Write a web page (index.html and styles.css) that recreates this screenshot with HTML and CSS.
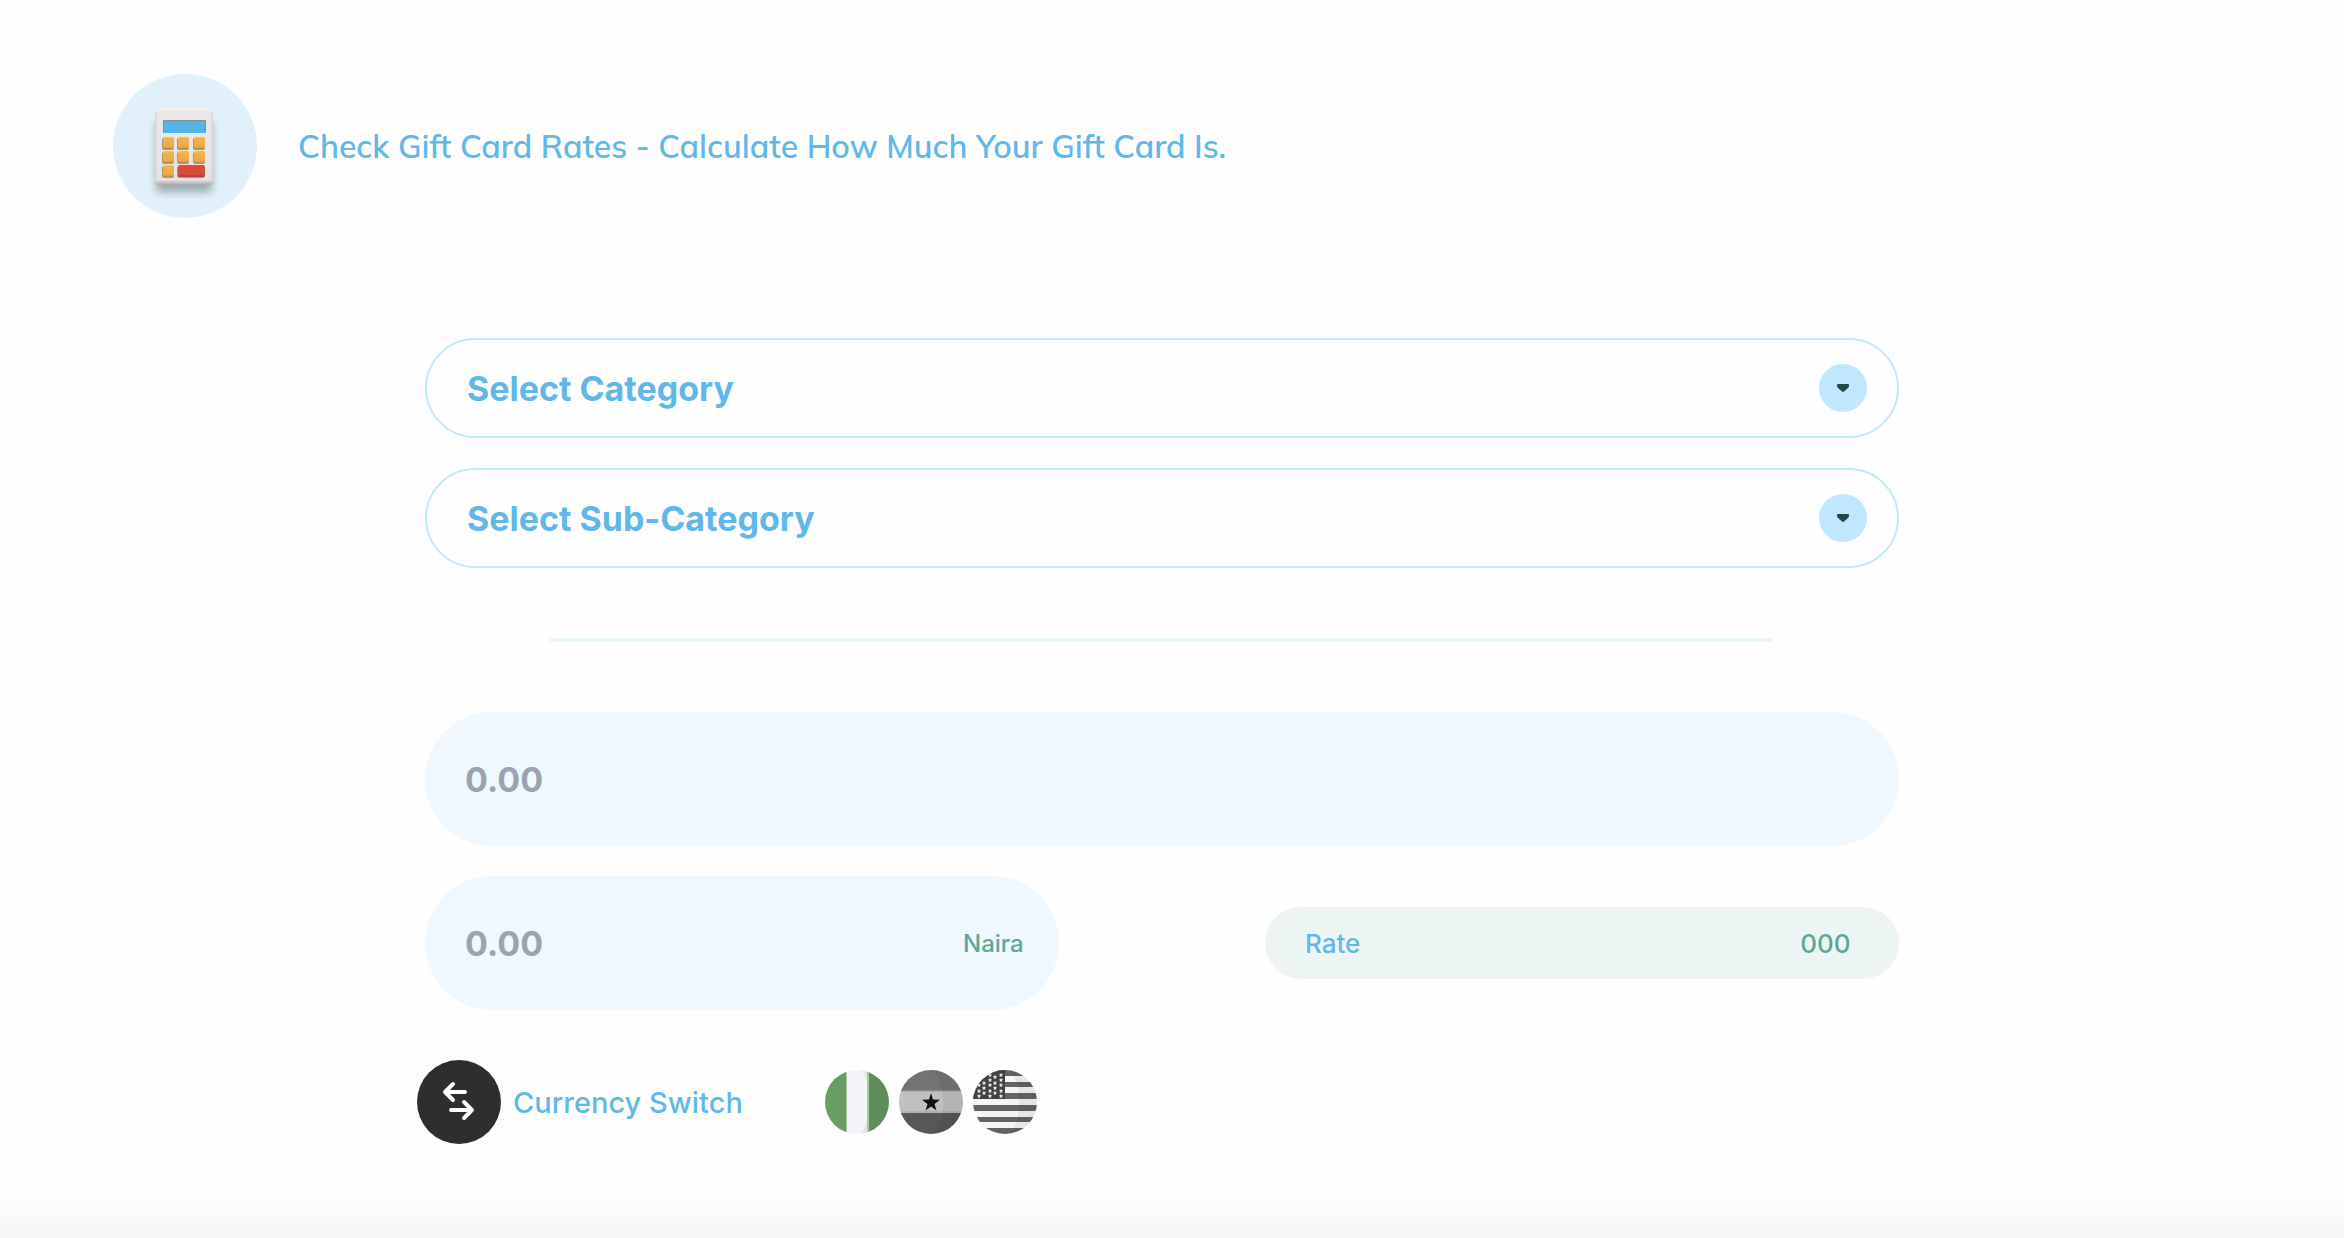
FILE: index.html
```html
<!DOCTYPE html>
<html lang="en">
<head>
<meta charset="utf-8">
<meta name="viewport" content="width=device-width, initial-scale=1">
<title>Gift Card Rate Calculator</title>
<link rel="stylesheet" href="styles.css">
</head>
<body>
<header class="page-header">
  <span class="badge">
    <svg class="calculator" viewBox="1 -6 76 104" aria-hidden="true">
      <defs>
        <linearGradient id="body" x1="0" y1="0" x2="0" y2="1"><stop offset="0" stop-color="#f6f4f4"/><stop offset=".06" stop-color="#e9e7e8"/><stop offset=".93" stop-color="#e6e4e5"/><stop offset="1" stop-color="#a9a7a7"/></linearGradient>
        <linearGradient id="key" x1="0" y1="0" x2="0" y2="1"><stop offset="0" stop-color="#f9c151"/><stop offset=".2" stop-color="#f3b048"/><stop offset=".8" stop-color="#efa945"/><stop offset="1" stop-color="#b98541"/></linearGradient>
        <filter id="soft" x="-30%" y="-30%" width="160%" height="160%"><feGaussianBlur stdDeviation="4"/></filter>
      </defs>
      <rect x="10" y="22" width="56" height="70" rx="4" fill="#6f8288" opacity=".65" filter="url(#soft)"/>
      <rect x="9" y="8" width="58" height="77" rx="4" fill="url(#body)"/>
      <path d="M10 12v69M66 12v69" stroke="#cfcdce" stroke-width="1"/>
      <rect x="17" y="20" width="43" height="13" rx="1" fill="#8a8d90"/>
      <rect x="18" y="21" width="41" height="12" fill="#52b5e6"/>
      <g fill="#a8977f">
        <rect x="16" y="38" width="12" height="12" rx="2"/><rect x="31" y="38" width="12" height="12" rx="2"/><rect x="47" y="38" width="12" height="12" rx="2"/>
        <rect x="16" y="52" width="12" height="12" rx="2"/><rect x="31" y="52" width="12" height="12" rx="2"/><rect x="47" y="52" width="12" height="12" rx="2"/>
        <rect x="16" y="66" width="12" height="12" rx="2"/><rect x="31" y="66" width="28" height="12" rx="2"/>
      </g>
      <g fill="url(#key)">
        <rect x="17" y="37" width="11" height="12" rx="2"/><rect x="32" y="37" width="11" height="12" rx="2"/><rect x="48" y="37" width="11" height="12" rx="2"/>
        <rect x="17" y="51" width="11" height="12" rx="2"/><rect x="32" y="51" width="11" height="12" rx="2"/><rect x="48" y="51" width="11" height="12" rx="2"/>
        <rect x="17" y="65" width="11" height="12" rx="2"/>
      </g>
      <rect x="32" y="65" width="27" height="12" rx="2" fill="#d94b3d"/>
      <path d="M33 76h25" stroke="#a53a30"/>
    </svg>
  </span>
  <h1 class="title">Check Gift Card Rates - Calculate How Much Your Gift Card Is.</h1>
</header>

<main class="calculator-form">
  <div class="picker">
    <select class="picker-select" aria-label="Category"><option>Select Category</option></select>
    <span class="picker-arrow"><svg width="12" height="8" viewBox="0 0 12 8"><path d="M1 0h10q1 0 1 1v1q0 1-1 2L7 7.500q-1 .8-2 0L1 4Q0 3 0 2V1q0-1 1-1z" fill="#1f4a48"/></svg></span>
  </div>
  <div class="picker">
    <select class="picker-select" aria-label="Sub-category"><option>Select Sub-Category</option></select>
    <span class="picker-arrow"><svg width="12" height="8" viewBox="0 0 12 8"><path d="M1 0h10q1 0 1 1v1q0 1-1 2L7 7.500q-1 .8-2 0L1 4Q0 3 0 2V1q0-1 1-1z" fill="#1f4a48"/></svg></span>
  </div>

  <hr class="divider">

  <div class="amount">
    <input class="amount-input" type="text" inputmode="decimal" placeholder="0.00" aria-label="Card amount">
  </div>
  <div class="result-row">
    <div class="amount">
      <input class="amount-input" id="payout" type="text" inputmode="decimal" placeholder="0.00">
      <label class="unit" for="payout">Naira</label>
    </div>
    <div class="rate">
      <span class="rate-label">Rate</span>
      <output class="rate-value">000</output>
    </div>
  </div>

  <div class="currency">
    <button class="switch" type="button">
      <span class="switch-icon">
        <svg width="84" height="84" viewBox="0 0 84 84" fill="none" stroke="#fff" stroke-width="4" stroke-linecap="round" stroke-linejoin="round"><path d="M48 32H28M36 24l-8 8 8 8M34 50h21M47 42l8 8-8 8"/></svg>
      </span>
      Currency Switch
    </button>
    <div class="flags">
      <button class="flag" type="button" aria-label="Nigeria">
        <svg width="64" height="64" viewBox="0 0 64 64">
          <defs><clipPath id="disc"><circle cx="32" cy="32" r="32"/></clipPath></defs>
          <g clip-path="url(#disc)"><path fill="#689e61" d="M0 0h22v64H0z"/><path fill="#f3f4f7" d="M22 0h21v64H22z"/><path fill="#e4e6ea" d="M36 0h7v16q-1-9-7-16zM43 44v20h-7q6-9 7-20z"/><path fill="#5d8d58" d="M43 0h21v64H43z"/><path fill="#a8cba4" d="M21 0h1v64h-1zM42 0h2v64h-2z"/></g>
        </svg>
      </button>
      <button class="flag" type="button" aria-label="Ghana">
        <svg width="64" height="64" viewBox="0 0 64 64">
          <g clip-path="url(#disc)"><path fill="#737373" d="M0 0h64v21H0z"/><path fill="#c0c0c0" d="M0 21h64v22H0z"/><path fill="#575757" d="M0 43h64v21H0z"/><path d="M0 21h64M0 42h64" stroke="#a0a0a0"/><path fill="#000" opacity=".06" d="M34 0q10 10 10 32T34 64h30V0z"/><path fill="#111" d="M32 23l2 6.500 7 .2-5.500 4.300 2 6.500-5.500-4-5.500 4 2-6.500-5.500-4.300 7-.2z"/></g>
        </svg>
      </button>
      <button class="flag" type="button" aria-label="United States">
        <svg width="64" height="64" viewBox="0 0 64 64">
          <defs><path id="star" fill="#eee" d="M0-2.200L.7-.7 2.200-.6 1 .6 1.400 2.100 0 1.300l-1.400.8.4-1.500L-2.200-.6l1.500-.1z"/></defs>
          <g clip-path="url(#disc)"><path fill="#f5f5f5" d="M0 0h64v64H0z"/>
          <path fill="#646464" d="M0 0h64v6H0zM0 12h64v5H0zM0 23h64v6H0zM0 35h64v6H0zM0 47h64v5H0zM0 58h64v6H0z"/>
          <path fill="#000" opacity=".06" d="M36 0q10 10 10 32T36 64h28V0z"/>
          <path fill="#424242" d="M0 0h32v29H0z"/>
          <use href="#star" x="17" y="5"/><use href="#star" x="28" y="5"/><use href="#star" x="22" y="7"/>
          <use href="#star" x="17" y="10"/><use href="#star" x="28" y="10"/><use href="#star" x="11" y="13"/><use href="#star" x="22" y="13"/>
          <use href="#star" x="17" y="15"/><use href="#star" x="28" y="15"/><use href="#star" x="6" y="15"/><use href="#star" x="22" y="18"/><use href="#star" x="11" y="18"/>
          <use href="#star" x="17" y="21"/><use href="#star" x="28" y="21"/><use href="#star" x="6" y="21"/><use href="#star" x="22" y="23"/><use href="#star" x="11" y="23"/>
          <use href="#star" x="17" y="26"/><use href="#star" x="28" y="26"/><use href="#star" x="6" y="26"/></g>
        </svg>
      </button>
    </div>
  </div>
</main>
</body>
</html>
```

FILE: styles.css
```css
* {
  box-sizing: border-box;
}

body {
  margin: 0;
  min-height: 100vh;
  background: linear-gradient(to top, #f5f5f5, #fbfbfb 24px, #fefefe 52px) #fefefe;
  color: #5fb8e8;
  font-family: Inter, "Liberation Sans", sans-serif;
}

button {
  margin: 0;
  padding: 0;
  border: 0;
  background: none;
  color: inherit;
  font: inherit;
  cursor: pointer;
}

.page-header {
  display: flex;
  align-items: center;
  gap: 41px;
  padding: 74px 113px 0;
}

.badge {
  display: flex;
  flex: none;
  align-items: center;
  justify-content: center;
  width: 144px;
  height: 144px;
  border-radius: 50%;
  background: #e1f1fb;
}

.calculator {
  width: 76px;
  height: 104px;
}

.title {
  margin: 0;
  font-family: Mulish, Muli, Lato, sans-serif;
  font-size: 32px;
  font-weight: 600;
  line-height: 40px;
}

.calculator-form {
  display: flex;
  flex-direction: column;
  gap: 30px;
  padding: 120px 19% 94px 18.13%;
}

.picker {
  display: grid;
  align-items: center;
}

.picker-select,
.picker-arrow {
  grid-area: 1 / 1;
}

.picker-select {
  appearance: none;
  width: 100%;
  height: 100px;
  padding: 0 120px 0 40px;
  border: 2px solid #c1e9fc;
  border-radius: 50px;
  background: transparent;
  color: inherit;
  font-family: inherit;
  font-size: 34px;
  font-weight: 700;
}

.picker-arrow {
  display: flex;
  align-items: center;
  justify-content: center;
  justify-self: end;
  width: 48px;
  height: 48px;
  margin-right: 32px;
  border-radius: 50%;
  background: #bfe8fe;
  pointer-events: none;
}

.divider {
  width: 83%;
  height: 4px;
  margin: 40px auto;
  border: 0;
  background: #e6f5fe;
}

.amount {
  display: flex;
  align-items: center;
  height: 134px;
  padding: 0 35px 0 40px;
  border-radius: 67px;
  background: #eff8fe;
}

.amount-input {
  flex: 1;
  min-width: 0;
  padding: 0;
  border: 0;
  background: none;
  color: #374151;
  font-family: inherit;
  font-size: 34px;
  font-weight: 700;
}

.amount-input::placeholder {
  color: #9ca3af;
  opacity: 1;
}

.unit {
  color: #5aa898;
  font-size: 24px;
  font-weight: 500;
}

.result-row {
  display: grid;
  grid-template-columns: 43% 43%;
  align-items: center;
  justify-content: space-between;
}

.rate {
  display: flex;
  align-items: center;
  justify-content: space-between;
  height: 72px;
  padding: 0 48px 0 40px;
  border-radius: 36px;
  background: #ecf5f4;
  font-size: 26px;
  font-weight: 500;
}

.rate-value {
  color: #5aa898;
}

.currency {
  display: flex;
  align-items: center;
  gap: 82px;
  margin: 20px 0 0 -8px;
}

.switch {
  display: flex;
  align-items: center;
  gap: 12px;
  font-size: 29px;
  font-weight: 500;
}

.switch-icon {
  width: 84px;
  height: 84px;
  border-radius: 50%;
  background: #2e2e2e;
}

.flags {
  display: flex;
  gap: 10px;
}

.flag {
  width: 64px;
  height: 64px;
}
```
